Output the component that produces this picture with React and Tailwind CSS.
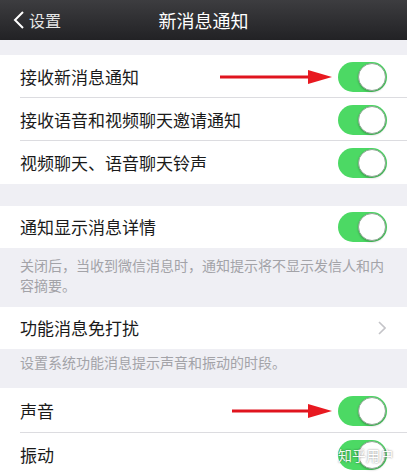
const font = { fontFamily: '"Noto Sans CJK SC", "Noto Sans", sans-serif' };

function Toggle() {
  return (
    <div className="relative h-[30px] w-[49px] rounded-full bg-[#4cd964]">
      <div className="absolute right-[1px] top-[1px] h-[28px] w-[28px] rounded-full border border-[#8fa894] bg-white shadow-[0_1px_2px_rgba(0,0,0,0.25)]" />
    </div>
  );
}

function Arrow({ width }) {
  return (
    <svg width={width} height="16" viewBox={`0 0 ${width} 16`} className="mr-[6px]">
      <line x1="0" y1="8" x2={width - 20} y2="8" stroke="#e0141e" strokeWidth="3" />
      <polygon points={`${width - 24},1 ${width},8 ${width - 24},15`} fill="#e81920" />
    </svg>
  );
}

function Row({ label, h = 'h-[43px]', arrow, chevron, divider }) {
  return (
    <div className={`relative flex items-center bg-white pl-[20px] pr-[20px] ${h}`}>
      <span className="flex-1 text-[17px] text-[#1a1a1a]">{label}</span>
      {arrow && <Arrow width={arrow} />}
      {chevron ? (
        <svg width="8" height="14" viewBox="0 0 8 14" className="mr-[1px]">
          <polyline points="1,1 7,7 1,13" fill="none" stroke="#c4c4c8" strokeWidth="1.6" />
        </svg>
      ) : (
        <Toggle />
      )}
      {divider && <div className="absolute bottom-0 left-[20px] right-0 h-px bg-[#dcdce0]" />}
    </div>
  );
}

export default function App() {
  return (
    <div className="relative h-[474px] w-[407px] overflow-hidden bg-[#efeff4]" style={font}>
      <div className="relative flex h-[40px] items-center justify-center bg-gradient-to-b from-[#3d3d40] to-[#222225]">
        <div className="absolute left-[13px] top-0 flex h-full items-center text-white">
          <svg width="12" height="18" viewBox="0 0 12 18">
            <polyline points="10,1 2,9 10,17" fill="none" stroke="#fff" strokeWidth="2" />
          </svg>
          <span className="ml-[4px] text-[16px] text-[#e6e6e6]">设置</span>
        </div>
        <span className="text-[18px] text-white">新消息通知</span>
      </div>

      <div className="mt-[15px]">
        <Row label="接收新消息通知" arrow={112} divider />
        <Row label="接收语音和视频聊天邀请通知" divider />
        <Row label="视频聊天、语音聊天铃声" />
      </div>

      <div className="mt-[22px]">
        <Row label="通知显示消息详情" h="h-[42px]" />
      </div>
      <p className="px-[20px] pt-[7px] text-[14px] leading-[20px] text-[#a3a3a8]">
        关闭后，当收到微信消息时，通知提示将不显示发信人和内容摘要。
      </p>

      <div className="mt-[12px]">
        <Row label="功能消息免打扰" h="h-[42px]" chevron />
      </div>
      <p className="px-[20px] pt-[3px] text-[14px] leading-[20px] text-[#a3a3a8]">
        设置系统功能消息提示声音和振动的时段。
      </p>

      <div className="mt-[16px]">
        <Row label="声音" h="h-[45px]" arrow={100} divider />
        <Row label="振动" h="h-[43px]" />
      </div>

      <div className="absolute bottom-[8px] right-[13px] text-[14px] text-white opacity-90 [text-shadow:0_0_2px_rgba(0,0,0,0.6)]">
        知乎用户
      </div>
    </div>
  );
}
